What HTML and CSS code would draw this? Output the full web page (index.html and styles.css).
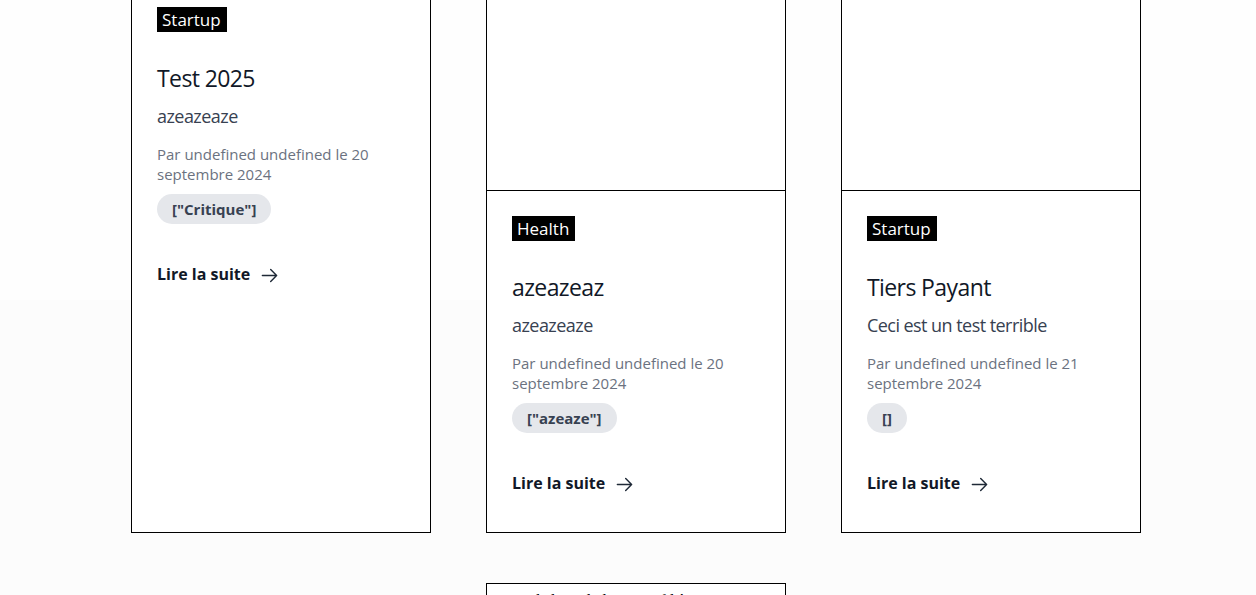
FILE: index.html
```html
<!DOCTYPE html>
<html lang="fr">
<head>
<meta charset="utf-8">
<title>Articles</title>
<link rel="stylesheet" href="styles.css">
</head>
<body>
<main class="page">
  <section class="grid">
    <article class="card">
      <div class="card-media card-media--short"></div>
      <div class="card-body">
        <span class="tag">Startup</span>
        <h3 class="title">Test 2025</h3>
        <p class="excerpt">azeazeaze</p>
        <p class="meta">Par undefined undefined le 20 septembre 2024</p>
        <span class="pill">["Critique"]</span>
        <a class="more" href="#">Lire la suite
          <svg class="arrow" viewBox="0 0 24 24" fill="none" stroke="currentColor" stroke-width="1.8" stroke-linecap="round" stroke-linejoin="round"><path d="M13.5 4.5 21 12m0 0-7.5 7.5M21 12H3"/></svg>
        </a>
      </div>
    </article>
    <article class="card">
      <div class="card-media card-media--tall"></div>
      <div class="card-body">
        <span class="tag">Health</span>
        <h3 class="title">azeazeaz</h3>
        <p class="excerpt">azeazeaze</p>
        <p class="meta">Par undefined undefined le 20 septembre 2024</p>
        <span class="pill">["azeaze"]</span>
        <a class="more" href="#">Lire la suite
          <svg class="arrow" viewBox="0 0 24 24" fill="none" stroke="currentColor" stroke-width="1.8" stroke-linecap="round" stroke-linejoin="round"><path d="M13.5 4.5 21 12m0 0-7.5 7.5M21 12H3"/></svg>
        </a>
      </div>
    </article>
    <article class="card">
      <div class="card-media card-media--tall"></div>
      <div class="card-body">
        <span class="tag">Startup</span>
        <h3 class="title">Tiers Payant</h3>
        <p class="excerpt">Ceci est un test terrible</p>
        <p class="meta">Par undefined undefined le 21 septembre 2024</p>
        <span class="pill">[]</span>
        <a class="more" href="#">Lire la suite
          <svg class="arrow" viewBox="0 0 24 24" fill="none" stroke="currentColor" stroke-width="1.8" stroke-linecap="round" stroke-linejoin="round"><path d="M13.5 4.5 21 12m0 0-7.5 7.5M21 12H3"/></svg>
        </a>
      </div>
    </article>
    <article class="card card--second">
      <div class="card-media card-media--alt">Image de l'article le Zoom filière</div>
      <div class="card-body">
        <span class="tag">Startup</span>
        <h3 class="title">Zoom filière</h3>
      </div>
    </article>
  </section>
</main>
</body>
</html>
```
FILE: styles.css
```css
* { box-sizing: border-box; }

html, body {
  margin: 0;
  padding: 0;
}

body {
  font-family: "Open Sans", "Noto Sans", sans-serif;
  background: linear-gradient(#fefefe 0, #fefefe 300px, #fcfcfc 300px);
  background-color: #fcfcfc;
  height: 595px;
  overflow: hidden;
}

.page {
  padding-left: 131px;
}

.grid {
  margin-top: -60px;
  display: grid;
  grid-template-columns: repeat(3, 300px);
  column-gap: 55px;
  row-gap: 50px;
  align-items: stretch;
}

.card {
  background: #fff;
  border: 1px solid #000;
  display: flex;
  flex-direction: column;
}

.card--second {
  grid-column: 2;
}

.card-media {
  border-bottom: 1px solid #000;
  background: #fff;
}

.card-media--short { height: 41px; }
.card-media--tall { height: 250px; }

.card-media--alt {
  height: 200px;
  font-family: "Liberation Serif", serif;
  font-size: 16px;
  line-height: 20px;
  color: #000;
  padding: 7px 0 0 1px;
}

.card-body {
  padding: 25px 25px 37px;
  display: flex;
  flex-direction: column;
  align-items: flex-start;
}

.tag {
  display: inline-block;
  background: #000;
  color: #fff;
  font-size: 17px;
  line-height: 25px;
  height: 25px;
  padding: 0 6px 0 5px;
}

.title {
  margin: 30px 0 0;
  font-size: 23px;
  line-height: 32px;
  font-weight: 400;
  letter-spacing: -0.6px;
  color: #111827;
}

.excerpt {
  margin: 8px 0 0;
  font-size: 18px;
  line-height: 28px;
  letter-spacing: -0.55px;
  color: #374151;
}

.meta {
  margin: 14px 0 0;
  font-size: 15px;
  line-height: 20px;
  color: #6b7280;
}

.pill {
  margin-top: 10px;
  display: inline-block;
  height: 30px;
  line-height: 30px;
  padding: 0 15px;
  border-radius: 15px;
  background: #e5e7eb;
  color: #374151;
  font-size: 15px;
  font-weight: 700;
}

.more {
  margin-top: 38px;
  display: inline-flex;
  align-items: center;
  font-size: 16px;
  line-height: 24px;
  font-weight: 700;
  color: #111827;
  text-decoration: none;
}

.arrow {
  width: 19px;
  height: 19px;
  margin-left: 10px;
  margin-top: 3px;
  color: #1f2937;
}
```
